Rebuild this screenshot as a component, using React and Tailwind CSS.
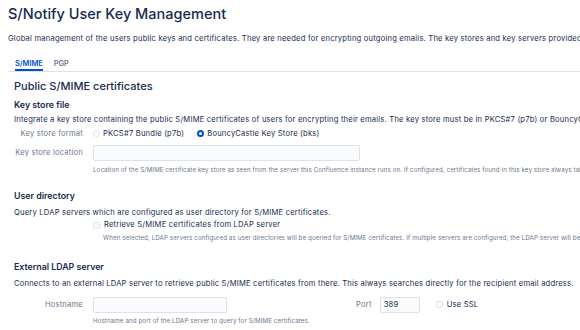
import React from "react";

function Radio({ checked }) {
  return checked ? (
    <span className="w-[7px] h-[7px] rounded-full bg-[#0052CC] flex items-center justify-center shrink-0">
      <span className="w-[3px] h-[3px] rounded-full bg-white" />
    </span>
  ) : (
    <span className="w-[7px] h-[7px] rounded-full border border-[#DFE1E6] bg-[#FAFBFC] shrink-0" />
  );
}

function Checkbox() {
  return <span className="w-[7px] h-[7px] rounded-[1.5px] border border-[#DFE1E6] bg-[#FAFBFC] shrink-0" />;
}

const body = "text-[7.6px] tracking-[0.2px]";
const help = "text-[6.2px] tracking-[0.1px] text-[#6B778C]";

export default function App() {
  return (
    <div className="w-[580px] h-[330px] overflow-hidden bg-white text-[#172B4D] font-['Inter',sans-serif] whitespace-nowrap">
      <div className="pl-[8px] pt-[4px]">
        <h1 className="h-[20px] leading-[20px] text-[14.5px] font-medium">S/Notify User Key Management</h1>
        <p className={`mt-[9px] h-[12px] leading-[12px] ${body}`}>
          Global management of the users public keys and certificates. They are needed for encrypting outgoing emails. The key stores and key servers provided here are used for all users.
        </p>
      </div>
      <div className="ml-[8px] mt-[13px] flex border-b border-[#DFE1E6] pl-[7px] gap-[11px]">
        <div className="h-[13px] leading-[12px] pb-px border-b-2 border-[#0052CC] -mb-px text-[7.4px] font-semibold text-[#0052CC]">S/MIME</div>
        <div className="h-[13px] leading-[12px] text-[7.4px] font-semibold text-[#6B778C]">PGP</div>
      </div>
      <div className="pl-[14px]">
        <h2 className="mt-[7px] h-[14px] leading-[14px] text-[11px] font-medium">Public S/MIME certificates</h2>
        <h3 className="mt-[6px] h-[12px] leading-[12px] text-[8.8px] font-semibold">Key store file</h3>
        <p className={`mt-[3px] h-[12px] leading-[12px] ${body}`}>
          Integrate a key store containing the public S/MIME certificates of users for encrypting their emails. The key store must be in PKCS#7 (p7b) or BouncyCastle Key Store (bks) format.
        </p>
        <div className={`mt-[2px] h-[12px] flex items-center ${body}`}>
          <span className="w-[69px] text-right text-[#6B778C]">Key store format</span>
          <span className="ml-[10px] flex items-center gap-[3px]">
            <Radio />
            <span>PKCS#7 Bundle (p7b)</span>
          </span>
          <span className="ml-[13px] flex items-center gap-[3px]">
            <Radio checked />
            <span>BouncyCastle Key Store (bks)</span>
          </span>
        </div>
        <div className={`mt-[5px] h-[16px] flex items-center ${body}`}>
          <span className="w-[69px] text-right text-[#6B778C]">Key store location</span>
          <span className="ml-[10px] w-[267px] h-[16px] rounded-[2px] border border-[#DFE1E6] bg-[#FAFBFC]" />
        </div>
        <p className={`mt-[4px] ml-[79px] h-[10px] leading-[10px] ${help}`}>
          Location of the S/MIME certificate key store as seen from the server this Confluence instance runs on. If configured, certificates found in this key store always take precedence.
        </p>

        <h3 className="mt-[15px] h-[12px] leading-[12px] text-[8.8px] font-semibold">User directory</h3>
        <p className={`mt-[5px] h-[12px] leading-[12px] ${body}`}>
          Query LDAP servers which are configured as user directory for S/MIME certificates.
        </p>
        <div className={`h-[12px] ml-[79px] flex items-center gap-[4px] ${body}`}>
          <Checkbox />
          <span>Retrieve S/MIME certificates from LDAP server</span>
        </div>
        <p className={`mt-[2px] ml-[89px] h-[10px] leading-[10px] ${help}`}>
          When selected, LDAP servers configured as user directories will be queried for S/MIME certificates. If multiple servers are configured, the LDAP server will be queried in order.
        </p>

        <h3 className="mt-[18px] h-[12px] leading-[12px] text-[8.8px] font-semibold">External LDAP server</h3>
        <p className={`mt-[5px] h-[12px] leading-[12px] ${body}`}>
          Connects to an external LDAP server to retrieve public S/MIME certificates from there. This always searches directly for the recipient email address.
        </p>
        <div className={`mt-[7px] h-[16px] flex items-center ${body}`}>
          <span className="w-[69px] text-right text-[#6B778C]">Hostname</span>
          <span className="ml-[10px] w-[134px] h-[16px] rounded-[2px] border border-[#DFE1E6] bg-[#FAFBFC]" />
          <span className="ml-[129px] text-[#6B778C]">Port</span>
          <span className="ml-[8px] w-[40px] h-[16px] rounded-[2px] border border-[#DFE1E6] bg-[#FAFBFC] flex items-center pl-[3px]">389</span>
          <span className="ml-[16px] flex items-center gap-[4px]">
            <Checkbox />
            <span>Use SSL</span>
          </span>
        </div>
        <p className={`mt-[3px] ml-[79px] h-[10px] leading-[10px] ${help}`}>
          Hostname and port of the LDAP server to query for S/MIME certificates.
        </p>
      </div>
    </div>
  );
}
